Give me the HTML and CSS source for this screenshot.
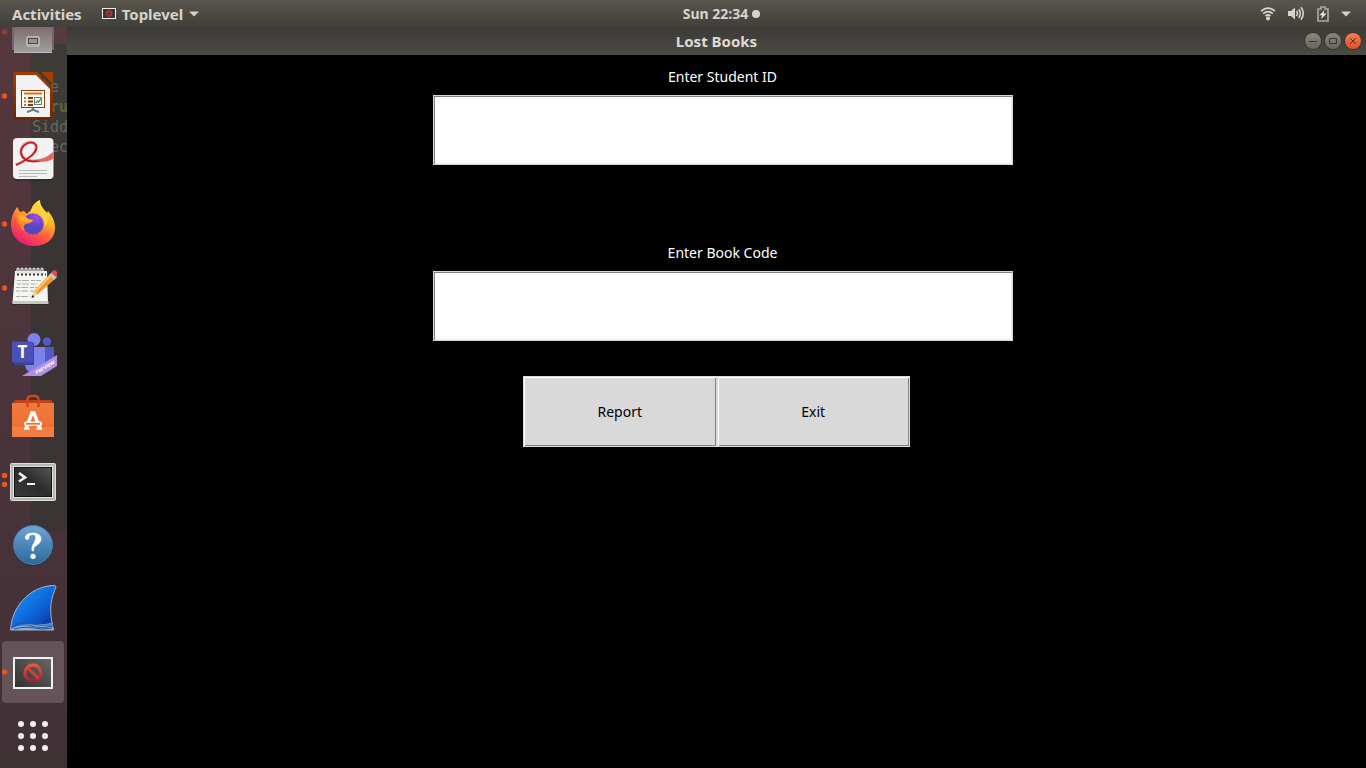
FILE: index.html
```html
<!DOCTYPE html>
<html lang="en">
<head>
<meta charset="utf-8">
<title>Lost Books</title>
<link rel="stylesheet" href="styles.css">
</head>
<body>
<header class="topbar">
  <nav class="topbar-left">
    <button class="bar-button" type="button">Activities</button>
    <button class="bar-button app-menu" type="button">
      <svg width="14" height="11" viewBox="0 0 14 11" aria-hidden="true"><rect x=".5" y=".5" width="13" height="10" fill="#393635" stroke="#eee"/><circle cx="7" cy="5.5" r="2.6" fill="none" stroke="#cf3038" stroke-width="1.3"/><path d="M5 4l4 3" stroke="#cf3038"/></svg>
      <span>Toplevel</span>
      <svg width="10" height="6" viewBox="0 0 10 6" aria-hidden="true"><path d="M0 .5h10L5 5.5z" fill="#d4d0c8"/></svg>
    </button>
  </nav>
  <button class="bar-button clock" type="button">Sun 22:34<span class="notice"></span></button>
  <button class="bar-button status" type="button" aria-label="System menu">
    <svg width="16" height="16" viewBox="0 0 16 16" fill="none" stroke="#d6d3cd" stroke-width="1.7" aria-hidden="true"><path d="M1 5.2Q8 -.8 15 5.2M3.2 7.7Q8 3.600 12.800 7.700M5.500 10Q8 8 10.500 10" /><circle cx="8" cy="12.500" r="2" fill="#d6d3cd" stroke="none"/></svg>
    <svg width="17" height="16" viewBox="0 0 17 16" fill="none" stroke="#d6d3cd" stroke-width="1.6" aria-hidden="true"><path d="M0 5h3L7 1.500v12L3 10H0z" fill="#d6d3cd" stroke="none"/><path d="M8.500 5q1.800 2.500 0 5M10.800 3.200q3 4.300 0 8.600M13 1.300q4.500 6.200 0 12.400"/></svg>
    <svg width="12" height="16" viewBox="0 0 12 16" aria-hidden="true"><path d="M1 3h3V1h4v2h3v12H1z" fill="none" stroke="#aaa7a1" stroke-width="1.700"/><path d="M7.500 4L2.500 9.300h2.700L4 13l5.500-5.500H6.500z" fill="#eeeae4"/></svg>
    <svg width="10" height="6" viewBox="0 0 10 6" aria-hidden="true"><path d="M0 .5h10L5 5.500z" fill="#d4d0c8"/></svg>
  </button>
</header>

<div class="workspace">
  <aside class="dock">
    <pre class="backdrop" aria-hidden="true">  e
  <b>ru</b>
Sidd
  ec</pre>
    <button class="dock-item" type="button" aria-label="Removable drive">
      <svg viewBox="0 0 66 64"><defs><linearGradient id="drive" x2="0" y2="1"><stop stop-color="#755c61"/><stop offset="1" stop-color="#a1a19f"/></linearGradient></defs><circle cx="4.500" cy="32" r="2.700" fill="#8c3f32"/><path d="M12 20h42v30H12z" fill="#71676a"/><path d="M14 20h38v33H14z" fill="url(#drive)"/><path d="M14 52.500h38" stroke="#bbb"/><rect x="26" y="36" width="14" height="11" rx="2" fill="#b6b1b1"/><rect x="28.500" y="38.500" width="9" height="5" fill="#999393" stroke="#4a4445"/></svg>
    </button>
    <button class="dock-item" type="button" aria-label="LibreOffice Impress">
      <svg viewBox="0 0 66 64"><defs><linearGradient id="impress" x2="0" y2="1"><stop stop-color="#a33e03"/><stop offset="1" stop-color="#732600"/></linearGradient></defs><circle class="running" cx="4.500" cy="32" r="2.700"/><path d="M41 8h12v12z" fill="#a33e03"/><path d="M16 8h21l16 16v28q0 4-3 4H16q-3 0-3-3V11q0-3 3-3z" fill="url(#impress)"/><path d="M16 11h20l14 14v28H16z" fill="#f2f2f2"/><path d="M33 43v3M27 48q3 0 6-3 3 3 6 3" fill="none" stroke="#777" stroke-width="1.800"/><rect x="21.500" y="26.500" width="23" height="17" fill="#fff" stroke="#9b3b06"/><path d="M24 29.500h18" stroke="#d66f22" stroke-width="2"/><path d="M24 34h2M24 37.500h2M24 41h2" stroke="#d66f22" stroke-width="2"/><path d="M28 34h5M28 37.500h5M28 41h5" stroke="#933400" stroke-width="2"/><rect x="34.500" y="33.500" width="7" height="7" fill="#fff" stroke="#777"/><path d="M35.500 39l2-2 1 1 2.500-3.500" fill="none" stroke="#35a745" stroke-width="1.500"/></svg>
    </button>
    <button class="dock-item" type="button" aria-label="Document Viewer">
      <svg viewBox="0 0 66 64"><rect x="13" y="11" width="41" height="42" rx="4" fill="#29252580"/><rect x="13" y="10" width="40.500" height="41" rx="4" fill="#f2f2f1"/><path d="M16 37C27 32 38 25 36 18C34 11 21 14 21 24C21 34 39 37 53 26" fill="none" stroke="#dc9a9c" stroke-width="3"/><path d="M16 37C29 31 39 23 36 17C32 11 20 17 21 25C23 37 40 34 52 29" fill="none" stroke="#c3181f" stroke-width="1.600"/><path d="M36 32q9 0 17-8v7q-8 5-17 1z" fill="#e46663"/><path d="M19 42.500h28M19 45.500h28M19 48.500h18" stroke="#bababa"/></svg>
    </button>
    <button class="dock-item" type="button" aria-label="Firefox">
      <svg viewBox="0 0 66 64"><defs><linearGradient id="fox" x1=".8" y1="0" x2=".25" y2="1"><stop stop-color="#fff44f"/><stop offset=".35" stop-color="#ffb52b"/><stop offset=".65" stop-color="#ff583e"/><stop offset="1" stop-color="#e51480"/></linearGradient><radialGradient id="globe" cx=".65" cy=".2"><stop stop-color="#9b4bf2"/><stop offset="1" stop-color="#5547bd"/></radialGradient></defs><circle class="running" cx="4.500" cy="32" r="2.700"/><path d="M14 20l3-5 3 5 4-1 3 3 4-4c1-4 4-8 9-10 0 6 4 9 7 13l1-2c5 6 7 11 7 17C55 47 46 54 34 54S11 46 11 33c0-5 1-9 3-13z" fill="url(#fox)"/><circle cx="33" cy="32" r="10.500" fill="url(#globe)"/><path d="M17 23q6-2 11 4l5 1q-1 3-7 4c-4 2-2 5-1 7q-8-4-8-16z" fill="#ff8b27"/><path d="M17 23q6-2 11 4l5 1q-2 3-8 2-5-1-8-7z" fill="#ffac2d"/><path d="M26 22q6-4 12-1 8 4 7 14 5-8 1-15-8-4-8-10-6 4-7 10z" fill="#ffd33a"/></svg>
    </button>
    <button class="dock-item" type="button" aria-label="Text Editor">
      <svg viewBox="0 0 66 64"><circle class="running" cx="4.500" cy="32" r="2.700"/><path d="M14 16h33l2 33H12z" fill="#24212180"/><path d="M15 15h32l1 32H12.500z" fill="#f5f5f0"/><path d="M12.500 45h36v3h-36z" fill="#c7c8c1"/><path d="M17 18v-4q0-3 2-1v5m2 0v-4q0-3 2-1v5m2 0v-4q0-3 2-1v5m2 0v-4q0-3 2-1v5m2 0v-4q0-3 2-1v5m2 0v-4q0-3 2-1v5m2 0v-4q0-3 2-1v5" fill="none" stroke="#ddd" stroke-width="1.300"/><path d="M17 18.500h29" stroke="#343434" stroke-width="2" stroke-dasharray="2 2"/><path d="M17 24.500h24M17 28h20M16 31.500h21M16 35h18M16 40.500h15" stroke="#aaa" stroke-dasharray="4 1 7 2"/><path d="M32 41l2-6 16-17 5 5-17 15z" fill="#ee982f"/><path d="M35 36l16-17" stroke="#ffc56b" stroke-width="2"/><path d="M32 41l2-6 4 3z" fill="#ead0a5"/><path d="M31.500 42l1-3 2 2z" fill="#222"/><path d="M49 19l3-3 5 5-3 3z" fill="#c4c7c5"/><path d="M51 17q3-5 6-1 1 3-1 5z" fill="#e34d50"/></svg>
    </button>
    <button class="dock-item" type="button" aria-label="Microsoft Teams">
      <svg viewBox="0 0 66 64"><circle cx="47" cy="21.500" r="4.200" fill="#5059c9"/><circle cx="34" cy="19.500" r="6.500" fill="#7b83eb"/><path d="M42 27h12v18H42z" fill="#5059c9"/><path d="M25 27h20v17q-1 10-10 10-9-1-10-9z" fill="#7b83eb"/><rect x="14" y="23" width="20" height="22" fill="#3e438d"/><rect x="12" y="21.500" width="21" height="21" rx="1" fill="#4751b8"/><text class="teams-letter" x="22.500" y="38" text-anchor="middle">T</text><path d="M57 35v11L41 56H22z" fill="#b18ee2"/><text class="ribbon" transform="translate(36.500 54.500) rotate(-31)">PREVIEW</text></svg>
    </button>
    <button class="dock-item" type="button" aria-label="Ubuntu Software">
      <svg viewBox="0 0 66 64"><defs><linearGradient id="bag" x2="0" y2="1"><stop stop-color="#ed7a3d"/><stop offset="1" stop-color="#ef6d2e"/></linearGradient></defs><path d="M15 16h36l3 4H12z" fill="#be4118"/><path d="M12 19h42v34H12z" fill="url(#bag)"/><path d="M12 43h42v10H12z" fill="#f37e41"/><path d="M27.500 23v-7q0-4 4-4h3q4 0 4 4v7" fill="none" stroke="#d24618" stroke-width="2.500"/><path d="M26.500 43.500L32 29h2l5.500 14.500" fill="none" stroke="#fff" stroke-width="3.500"/><path d="M24 44.500h5.500M36.500 44.500H42" stroke="#fff" stroke-width="2.500"/><rect x="24" y="37.500" width="18" height="4.500" rx="2" fill="#fff"/><path d="M26 39.800h14" stroke="#e9743a" stroke-width="1.800"/></svg>
    </button>
    <button class="dock-item" type="button" aria-label="Terminal">
      <svg viewBox="0 0 66 64"><defs><linearGradient id="term" x1="1" x2="0" y2="1"><stop stop-color="#555"/><stop offset=".5" stop-color="#2c2c2c"/><stop offset="1" stop-color="#3b3b3b"/></linearGradient></defs><circle class="running" cx="4.500" cy="27.500" r="2.700"/><circle class="running" cx="4.500" cy="36.500" r="2.700"/><rect x="10.500" y="15.500" width="45" height="37" rx="1" fill="#b7b7b4" stroke="#deded9"/><rect x="13" y="18" width="40" height="32" fill="#e1e1dd"/><rect x="14.500" y="19.500" width="37" height="29" fill="url(#term)" stroke="#151515"/><path d="M19 25l6 4.500-6 4" fill="none" stroke="#eee" stroke-width="2.700"/><path d="M27 36h8" stroke="#eee" stroke-width="2"/></svg>
    </button>
    <button class="dock-item" type="button" aria-label="Help">
      <svg viewBox="0 0 66 64"><defs><linearGradient id="help" x2="0" y2="1"><stop stop-color="#6ca5d6"/><stop offset="1" stop-color="#2c699b"/></linearGradient></defs><circle cx="33" cy="34" r="20" fill="#24232680"/><circle cx="33" cy="33" r="19.500" fill="url(#help)" stroke="#477ca8"/><path d="M25.500 27Q24 21 33 21c10 0 10 9 4 12q-4 2-3.500 6h-1.500q-1-5 2-8 4-8-1-8.500-4 0-4 3 0 3-3.500 1.500z" fill="#fff" stroke="#fff" stroke-width=".5"/><circle cx="33" cy="44.300" r="2.600" fill="#fff"/></svg>
    </button>
    <button class="dock-item" type="button" aria-label="Wireshark">
      <svg viewBox="0 0 66 64"><defs><linearGradient id="fin" x1=".3" y1=".2" x2="1" y2=".9"><stop stop-color="#1485f0"/><stop offset=".55" stop-color="#0c5bd0"/><stop offset="1" stop-color="#072d8b"/></linearGradient></defs><path d="M10.500 54C12 27 34 9 55 9.500q2 1 0 4C49 27 50 39 53.500 54z" fill="url(#fin)" stroke="#a0b2ca"/><path d="M11 53q10-6 21-5 10 1 20-1l2 7H11z" fill="#86aedd"/><path d="M12 51q11-4 20-1t21 0M15 48q9-2 17 0t20 1M14 53q12-3 20-1t18 0" fill="none" stroke="#2155a0"/></svg>
    </button>
    <button class="dock-item active" type="button" aria-label="Toplevel">
      <svg viewBox="0 0 66 64"><defs><linearGradient id="screen" x1="1" x2="0" y2="1"><stop stop-color="#686868"/><stop offset="1" stop-color="#303030"/></linearGradient><linearGradient id="ban" x2="0" y2="1"><stop stop-color="#e45646"/><stop offset="1" stop-color="#a8202e"/></linearGradient></defs><circle class="running" cx="4.500" cy="32" r="2.700"/><rect x="14" y="18" width="38" height="30" fill="url(#screen)" stroke="#f2f2f2" stroke-width="2"/><circle cx="33" cy="33" r="8" fill="none" stroke="url(#ban)" stroke-width="3.300"/><path d="M27.500 27.500l11 11" stroke="#d83d3e" stroke-width="3"/></svg>
    </button>
    <button class="dock-item" type="button" aria-label="Show Applications">
      <svg viewBox="0 0 66 64" fill="#f2f0ef"><circle cx="21" cy="20" r="3"/><circle cx="33" cy="20" r="3"/><circle cx="45" cy="20" r="3"/><circle cx="21" cy="32" r="3"/><circle cx="33" cy="32" r="3"/><circle cx="45" cy="32" r="3"/><circle cx="21" cy="44" r="3"/><circle cx="33" cy="44" r="3"/><circle cx="45" cy="44" r="3"/></svg>
    </button>
  </aside>

  <section class="window">
    <header class="titlebar">
      <h1 class="title">Lost Books</h1>
      <div class="controls">
        <button class="control" type="button" aria-label="Minimize"><svg viewBox="0 0 16 16"><path d="M4 8.500h8"/></svg></button>
        <button class="control" type="button" aria-label="Maximize"><svg viewBox="0 0 16 16"><path d="M4.500 5.500h7v5h-7z"/></svg></button>
        <button class="control close" type="button" aria-label="Close"><svg viewBox="0 0 16 16"><path d="M5 5l6 6M11 5l-6 6"/></svg></button>
      </div>
    </header>
    <form class="form">
      <div class="field">
        <label for="student-id">Enter Student ID</label>
        <input id="student-id" type="text">
      </div>
      <div class="field">
        <label for="book-code">Enter Book Code</label>
        <input id="book-code" type="text">
      </div>
      <div class="actions">
        <button class="action" type="button">Report</button>
        <button class="action" type="button">Exit</button>
      </div>
    </form>
  </section>
</div>
</body>
</html>
```
FILE: styles.css
```css
* { box-sizing: border-box; }

body {
  display: flex;
  flex-direction: column;
  height: 100vh;
  margin: 0;
  overflow: hidden;
  background: #000;
  font-family: "Noto Sans", sans-serif;
  font-size: 14px;
}

button {
  padding: 0;
  border: 0;
  background: none;
  color: inherit;
  font: inherit;
}

svg { display: block; }

.topbar {
  display: grid;
  grid-template-columns: 1fr auto 1fr;
  align-items: center;
  flex: none;
  height: 27px;
  padding: 0 15px 0 12px;
  background: linear-gradient(#59564e, #403f3a);
  color: #d6d3cd;
  font-weight: bold;
  line-height: 20px;
  text-shadow: 0 -1px #302f2b;
}

.topbar-left,
.app-menu,
.clock,
.status {
  display: flex;
  align-items: center;
}

.topbar-left {
  gap: 20px;
  font-size: 15px;
}

.app-menu { gap: 6px; }

.clock {
  gap: 4px;
  margin-left: 80px;
}

.notice {
  width: 8px;
  height: 8px;
  border-radius: 50%;
  background: #d6d3cd;
}

.status {
  justify-self: end;
  gap: 12px;
}

.workspace {
  display: flex;
  flex: 1;
  min-height: 0;
}

.dock {
  position: relative;
  display: flex;
  flex-direction: column;
  justify-content: flex-end;
  flex: none;
  width: 67px;
  overflow: hidden;
  background:
    linear-gradient(#553a3f, #553a3f) right top / 36px 17px no-repeat,
    linear-gradient(#3c3c36, #3c3a36 20%, #3b3434 28%, #3b3434) right top / 36px 505px no-repeat,
    linear-gradient(#55383e, #4b343b 50%, #433137 90%, #3d3234);
}

.backdrop {
  position: absolute;
  top: 50px;
  left: 32px;
  margin: 0;
  color: #666861;
  font: 15px/20px "DejaVu Sans Mono", monospace;
}

.backdrop b { color: #566c35; }

.dock-item {
  position: relative;
  flex: none;
  height: 64px;
}

.dock-item svg {
  width: 66px;
  height: 64px;
}

.active {
  margin: 1px 3px 1px 2px;
  height: 62px;
  border-radius: 4px;
  background: #645459;
}

.active svg { margin: -1px -2px; }

.running { fill: #e95420; }

.teams-letter {
  fill: #fff;
  font: bold 17px "Open Sans", sans-serif;
}

.ribbon {
  fill: #fff;
  font: bold 5px "Open Sans", sans-serif;
}

.window {
  display: flex;
  flex-direction: column;
  flex: 1;
}

.titlebar {
  display: grid;
  grid-template-columns: 1fr auto 1fr;
  align-items: center;
  height: 28px;
  padding: 0 5px;
  background: linear-gradient(#3b3a36, #4c4b45);
  color: #dfdbd2;
}

.title {
  grid-column: 2;
  margin: 0;
  font-size: 15px;
  line-height: 20px;
}

.controls {
  display: flex;
  justify-self: end;
  gap: 4px;
}

.control {
  width: 16px;
  height: 16px;
  border-radius: 50%;
  background: linear-gradient(#898780, #66645e);
  box-shadow: 0 0 0 1px #353430;
}

.control svg {
  fill: none;
  stroke: #383733;
}

.close { background: linear-gradient(#f67c55, #e4501f); }

.form {
  display: flex;
  flex-direction: column;
  align-items: center;
  padding: 12px;
  color: #fff;
}

.field {
  display: flex;
  flex-direction: column;
  align-items: center;
  gap: 8px;
  width: 100%;
  max-width: 592px;
  margin-bottom: 78px;
  padding-left: 12px;
  line-height: 20px;
}

.field:nth-child(2) { margin-bottom: 35px; }

.field input {
  width: 100%;
  height: 70px;
  padding: 0 8px;
  border: 1px solid #d9d9d9;
  border-radius: 0;
  outline: 0;
  background: #fff;
  box-shadow: inset 1px 1px #828282, inset -1px -1px #ececec;
  font: inherit;
}

.actions {
  display: flex;
  width: 100%;
  max-width: 387px;
}

.action {
  flex: 1;
  height: 71px;
  border: 1px solid #d9d9d9;
  background: #d9d9d9;
  box-shadow: inset 1px 1px #fff, inset -1px -1px #828282;
  color: #000;
  line-height: 20px;
}
```
